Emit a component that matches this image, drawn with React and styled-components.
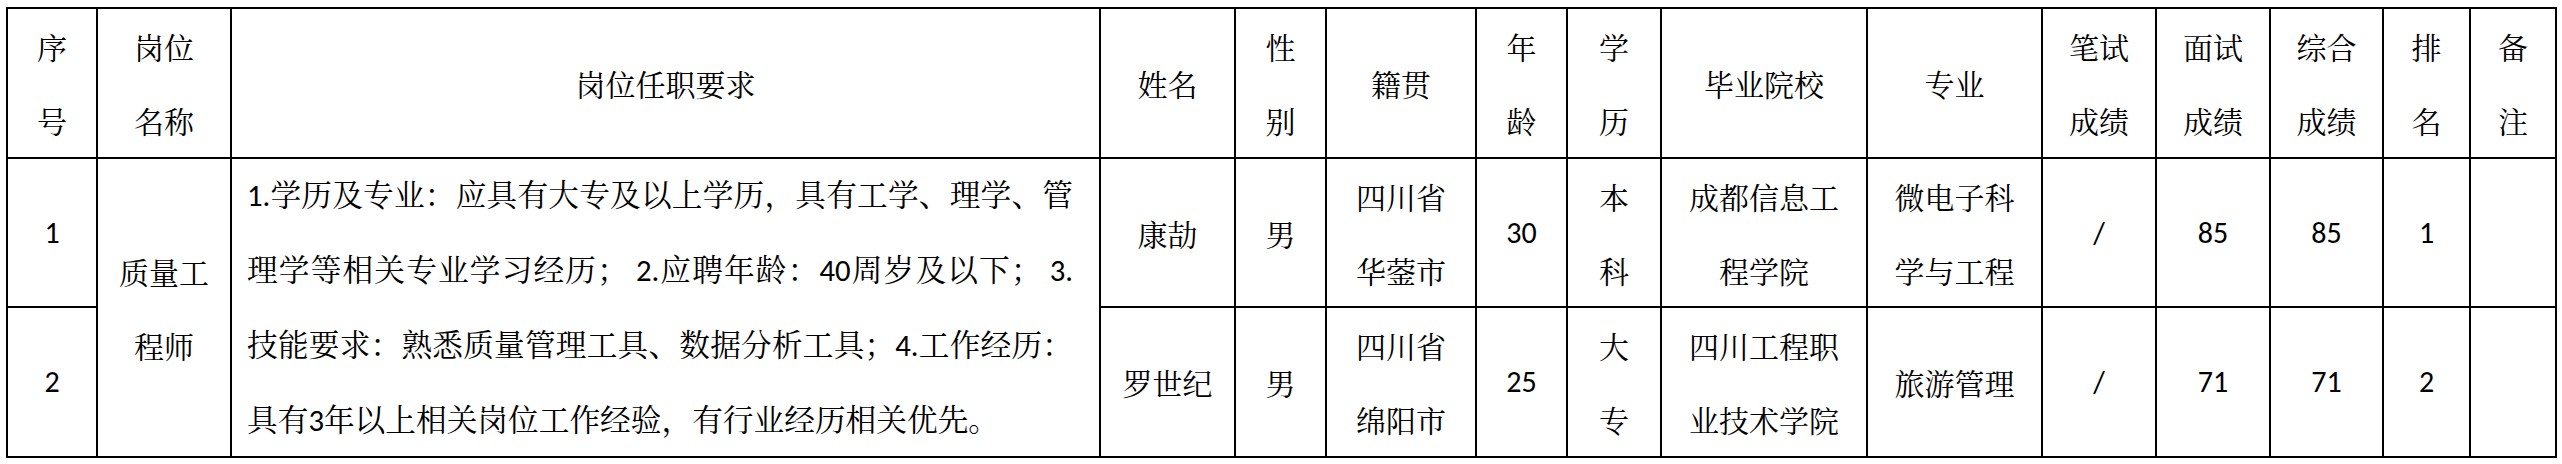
import React from "react";
import styled, { createGlobalStyle } from "styled-components";

const GlobalStyle = createGlobalStyle`
  html, body {
    margin: 0;
    padding: 0;
    background: #fff;
  }
  body {
    font-family: "Noto Serif CJK SC", "Noto Sans CJK SC", sans-serif;
    color: #000;
  }
`;

const Page = styled.div`
  padding: 7px 0 0 6px;
`;

const Sheet = styled.div`
  display: grid;
  grid-template-columns: 90px 134px 869px 135px 91px 150px 91px 94px 206px 175px 114px 114px 113px 87px 86px;
  grid-template-rows: 150px 149px 150px;
  width: max-content;
  border-top: 2px solid #000;
  border-left: 2px solid #000;
`;

const Cell = styled.div`
  box-sizing: border-box;
  border-right: 2px solid #000;
  border-bottom: 2px solid #000;
  display: flex;
  flex-direction: column;
  align-items: center;
  justify-content: center;
  text-align: center;
  font-size: 30px;
  line-height: 74px;
  white-space: nowrap;
  overflow: visible;
  font-family: ${(p) =>
    p.$num
      ? 'Carlito, Lato, "Noto Sans CJK SC", sans-serif'
      : '"Noto Serif CJK SC", "Noto Sans CJK SC", sans-serif'};
  grid-row: ${(p) => (p.$rows ? `span ${p.$rows}` : "auto")};
`;

const Requirements = styled(Cell)`
  align-items: stretch;
  padding: 0 26px 0 15px;
  font-size: 30.7px;
  line-height: 75px;
  font-family: Carlito, Lato, "Noto Serif CJK SC", "Noto Sans CJK SC", sans-serif;
`;

const Line = styled.div`
  text-align: justify;
  text-align-last: ${(p) => (p.$last ? "left" : "justify")};
  white-space: pre;
`;

const headers = [
  ["序", "号"],
  ["岗位", "名称"],
  ["岗位任职要求"],
  ["姓名"],
  ["性", "别"],
  ["籍贯"],
  ["年", "龄"],
  ["学", "历"],
  ["毕业院校"],
  ["专业"],
  ["笔试", "成绩"],
  ["面试", "成绩"],
  ["综合", "成绩"],
  ["排", "名"],
  ["备", "注"],
];

const requirementLines = [
  "1.学历及专业：应具有大专及以上学历，具有工学、理学、管",
  "理学等相关专业学习经历； 2.应聘年龄：40周岁及以下； 3.",
  "技能要求：熟悉质量管理工具、数据分析工具；4.工作经历：",
  "具有3年以上相关岗位工作经验，有行业经历相关优先。",
];

const candidates = [
  {
    no: "1",
    name: ["康劼"],
    gender: "男",
    origin: ["四川省", "华蓥市"],
    age: "30",
    degree: ["本", "科"],
    school: ["成都信息工", "程学院"],
    major: ["微电子科", "学与工程"],
    written: "/",
    interview: "85",
    total: "85",
    rank: "1",
  },
  {
    no: "2",
    name: ["罗世纪"],
    gender: "男",
    origin: ["四川省", "绵阳市"],
    age: "25",
    degree: ["大", "专"],
    school: ["四川工程职", "业技术学院"],
    major: ["旅游管理"],
    written: "/",
    interview: "71",
    total: "71",
    rank: "2",
  },
];

const Lines = ({ items }) => items.map((t) => <div key={t}>{t}</div>);

export default function App() {
  return (
    <Page>
      <GlobalStyle />
      <Sheet>
        {headers.map((h) => (
          <Cell key={h.join("")}>
            <Lines items={h} />
          </Cell>
        ))}

        {candidates.map((c, i) => (
          <React.Fragment key={c.no}>
            <Cell $num>{c.no}</Cell>
            {i === 0 && (
              <>
                <Cell $rows={2}>
                  <Lines items={["质量工", "程师"]} />
                </Cell>
                <Requirements $rows={2}>
                  {requirementLines.map((l, k) => (
                    <Line key={k} $last={k === requirementLines.length - 1}>
                      {l}
                    </Line>
                  ))}
                </Requirements>
              </>
            )}
            <Cell>
              <Lines items={c.name} />
            </Cell>
            <Cell>{c.gender}</Cell>
            <Cell>
              <Lines items={c.origin} />
            </Cell>
            <Cell $num>{c.age}</Cell>
            <Cell>
              <Lines items={c.degree} />
            </Cell>
            <Cell>
              <Lines items={c.school} />
            </Cell>
            <Cell>
              <Lines items={c.major} />
            </Cell>
            <Cell $num>{c.written}</Cell>
            <Cell $num>{c.interview}</Cell>
            <Cell $num>{c.total}</Cell>
            <Cell $num>{c.rank}</Cell>
            <Cell />
          </React.Fragment>
        ))}
      </Sheet>
    </Page>
  );
}
